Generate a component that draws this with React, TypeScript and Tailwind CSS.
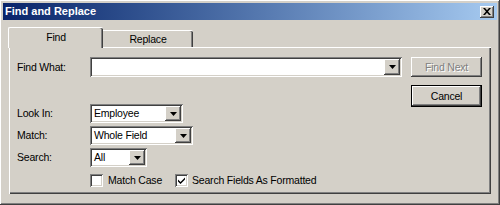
import React from "react";

const raised =
  "shadow-[inset_-1px_-1px_#404040,inset_1px_1px_#ffffff,inset_-2px_-2px_#808080,inset_2px_2px_#d4d0c8]";
const sunken =
  "shadow-[inset_1px_1px_#808080,inset_-1px_-1px_#ffffff,inset_2px_2px_#404040,inset_-2px_-2px_#d4d0c8]";

function Arrow() {
  return (
    <svg width="7" height="4" viewBox="0 0 7 4">
      <polygon points="0,0 7,0 3.5,4" fill="#000" />
    </svg>
  );
}

function Combo({ width, value }: { width: string; value: string }) {
  return (
    <div className={`${width} h-full bg-white ${sunken} flex items-stretch p-[2px]`}>
      <div className="flex-1 flex items-center pl-[2px] text-black">{value}</div>
      <div className={`w-[16px] bg-[#d4d0c8] ${raised} flex items-center justify-center`}>
        <Arrow />
      </div>
    </div>
  );
}

function Checkbox({ checked }: { checked?: boolean }) {
  return (
    <div className={`w-[13px] h-[13px] bg-white ${sunken} flex items-center justify-center`}>
      {checked && (
        <svg width="7" height="7" viewBox="0 0 7 7">
          <path d="M0 2.5 L2.5 5 L7 0.5 L7 2.5 L2.5 7 L0 4.5 Z" fill="#000" />
        </svg>
      )}
    </div>
  );
}

export default function App() {
  return (
    <div
      className={`w-[500px] h-[205px] bg-[#d4d0c8] p-[3px] ${raised} text-[10.5px] tracking-[-0.2px] leading-none text-black flex flex-col`}
      style={{ fontFamily: '"Liberation Sans", Arial, sans-serif' }}
    >
      {/* Title bar */}
      <div className="h-[17px] flex items-center justify-between bg-gradient-to-r from-[#0a246a] to-[#a6caf0] pl-[2px] pr-[3px]">
        <span className="text-white font-bold text-[11px] tracking-normal">Find and Replace</span>
        <div className={`w-[14px] h-[12px] bg-[#d4d0c8] ${raised} flex items-center justify-center`}>
          <svg width="8" height="7" viewBox="0 0 8 7">
            <path d="M0 0 L2 0 L4 2.3 L6 0 L8 0 L5 3.5 L8 7 L6 7 L4 4.7 L2 7 L0 7 L3 3.5 Z" fill="#000" />
          </svg>
        </div>
      </div>

      {/* Body */}
      <div className="pl-[6px] pt-[7px] flex flex-col">
        {/* Tabs */}
        <div className="h-[20px] flex items-end -ml-[1px] relative z-10">
          <div className="w-[95px] h-[21px] -mb-[1px] bg-[#d4d0c8] border-l border-t border-white rounded-tl-[2px] rounded-tr-[2px] shadow-[inset_-1px_0_#404040,inset_-2px_0_#808080] flex items-center justify-center pb-[2px]">
            Find
          </div>
          <div className="w-[90px] h-[17px] bg-[#d4d0c8] border-t border-white rounded-tr-[2px] shadow-[inset_-1px_0_#404040,inset_-2px_0_#808080] flex items-center justify-center">
            Replace
          </div>
        </div>

        {/* Panel */}
        <div className="w-[482px] h-[147px] border-l border-t border-white shadow-[inset_-1px_-1px_#404040,inset_-2px_-2px_#808080] pl-[7px] pt-[9px] flex">
          <div className="w-[385px] flex flex-col">
            <div className="h-[20px] flex items-center">
              <div className="w-[73px]">Find What:</div>
              <Combo width="w-[312px]" value="" />
            </div>
            <div className="h-[19px] mt-[27px] flex items-center">
              <div className="w-[73px]">Look In:</div>
              <Combo width="w-[93px]" value="Employee" />
            </div>
            <div className="h-[19px] mt-[3px] flex items-center">
              <div className="w-[73px]">Match:</div>
              <Combo width="w-[103px]" value="Whole Field" />
            </div>
            <div className="h-[19px] mt-[3px] flex items-center">
              <div className="w-[73px]">Search:</div>
              <Combo width="w-[57px]" value="All" />
            </div>
            <div className="h-[13px] mt-[7px] ml-[73px] flex items-center">
              <Checkbox />
              <span className="ml-[5px]">Match Case</span>
              <div className="ml-[13px]">
                <Checkbox checked />
              </div>
              <span className="ml-[4px]">Search Fields As Formatted</span>
            </div>
          </div>
          <div className="ml-[9px] w-[71px] flex flex-col">
            <div
              className={`h-[20px] ${raised} flex items-center justify-center text-[#808080] [text-shadow:1px_1px_#ffffff]`}
            >
              Find Next
            </div>
            <div className="h-[22px] mt-[8px] border border-black">
              <div className={`h-full ${raised} flex items-center justify-center`}>Cancel</div>
            </div>
          </div>
        </div>
      </div>
    </div>
  );
}
